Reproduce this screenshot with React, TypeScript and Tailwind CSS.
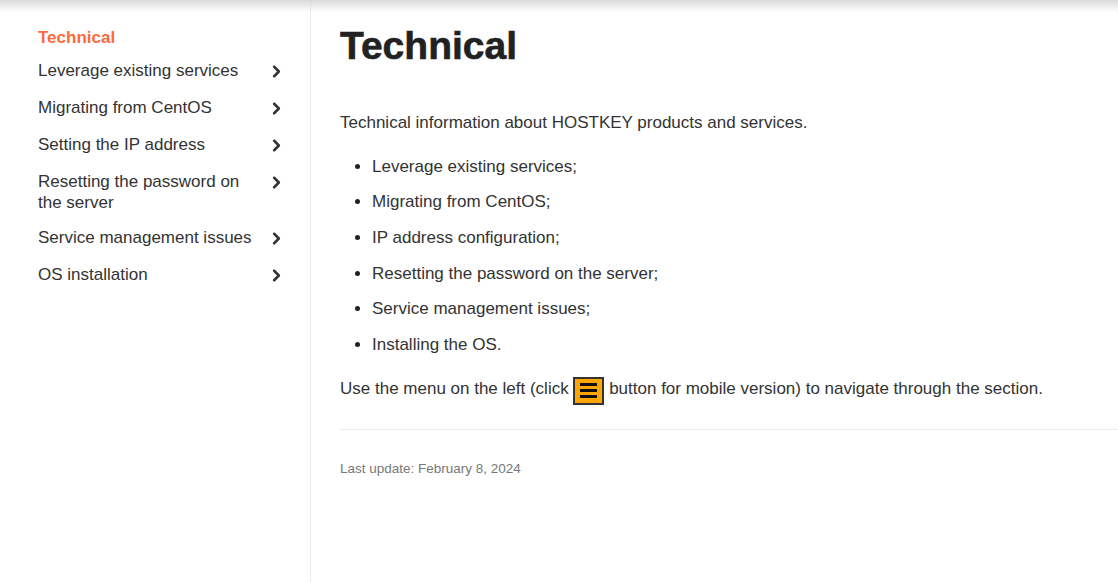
import { ChevronRight } from 'lucide-react';

const navItems = [
  'Leverage existing services',
  'Migrating from CentOS',
  'Setting the IP address',
  'Resetting the password on the server',
  'Service management issues',
  'OS installation',
];

const bullets = [
  'Leverage existing services;',
  'Migrating from CentOS;',
  'IP address configuration;',
  'Resetting the password on the server;',
  'Service management issues;',
  'Installing the OS.',
];

export default function App() {
  return (
    <div className="relative h-[583px] w-[1118px] overflow-hidden bg-white font-['Liberation_Sans',Arial,sans-serif] text-[#333]">
      <div className="absolute inset-x-0 top-0 h-3 bg-gradient-to-b from-[#d9d9d9] to-white/0" />
      <div className="flex h-full">
        <aside className="w-[311px] shrink-0 border-r border-[#ececec] pl-[38px] pr-[24px] pt-[28px]">
          <div className="text-[17px] font-bold leading-5 text-[#ff6a3d]">Technical</div>
          <ul className="mt-[5px]">
            {navItems.map((item) => (
              <li key={item} className="flex min-h-[37px] items-start justify-between py-[7px]">
                <span className="w-[220px] text-[17px] leading-[21px]">{item}</span>
                <ChevronRight size={19} strokeWidth={3.2} className="mt-[2px] text-[#333]" />
              </li>
            ))}
          </ul>
        </aside>
        <main className="flex-1 pl-[29px] pt-[24px]">
          <h1 className="text-[39px] font-bold leading-[44px] text-[#222] [-webkit-text-stroke:0.6px_#222]">Technical</h1>
          <p className="mt-[43px] text-[17px] leading-6">Technical information about HOSTKEY products and services.</p>
          <ul className="mt-[14px] list-disc pl-[32px] text-[17px] leading-6 marker:text-[#222]">
            {bullets.map((b) => (
              <li key={b} className="py-[5.8px]">{b}</li>
            ))}
          </ul>
          <p className="mt-[13px] text-[17px] leading-6">
            Use the menu on the left (click{' '}
            <span className="inline-flex h-[28px] w-[31px] translate-y-[1px] flex-col items-center justify-center gap-[3px] border-2 border-[#333] bg-[#ffa500] align-middle">
              <span className="h-[3px] w-[17px] bg-[#111]" />
              <span className="h-[3px] w-[17px] bg-[#111]" />
              <span className="h-[3px] w-[17px] bg-[#111]" />
            </span>{' '}
            button for mobile version) to navigate through the section.
          </p>
          <div className="mt-[25px] border-t border-[#ececec]" />
          <p className="mt-[31px] text-[13.5px] leading-4 text-[#777]">Last update: February 8, 2024</p>
        </main>
      </div>
    </div>
  );
}
